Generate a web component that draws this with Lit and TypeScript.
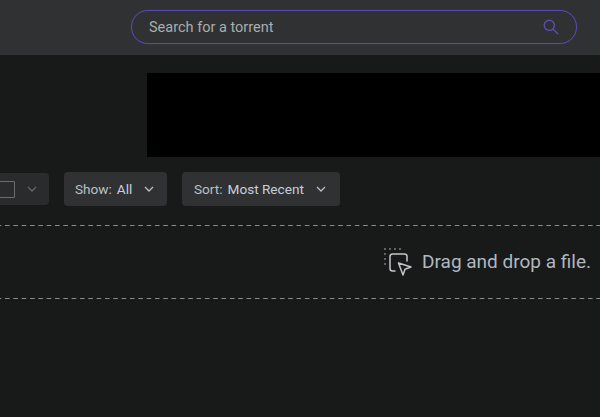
import { LitElement, html, css } from "lit";
import { customElement } from "lit/decorators.js";

const chevron = () => html`<svg class="chev" width="10" height="6" viewBox="0 0 10 6" fill="none" stroke="currentColor" stroke-width="1.3"><path d="M1 1l4 4 4-4"/></svg>`;

@customElement("app-root")
export class AppRoot extends LitElement {
  static styles = css`
    :host { display: block; width: 600px; height: 417px; overflow: hidden; background: #181a1a; font-family: "Roboto", "Liberation Sans", sans-serif; }
    .header { height: 55px; box-sizing: border-box; background: #2f3133; padding: 10px 23px 0 131px; }
    .search { height: 34px; box-sizing: border-box; border: 1px solid #5d48b3; box-shadow: 0 0 1px #5d48b3; border-radius: 17px; display: flex; align-items: center; justify-content: space-between; padding: 0 17px; color: #a9adb1; font-size: 14.5px; }
    .search svg { display: block; }
    .banner { height: 84px; margin: 18px 0 0 147px; background: #000; }
    .toolbar { display: flex; gap: 15px; margin: 15px 0 0 -20px; align-items: flex-start; }
    .btn { height: 34px; box-sizing: border-box; background: #2f3133; border-radius: 4px; display: flex; align-items: center; color: #b9c0c7; font-size: 13.6px; white-space: nowrap; }
    .check { width: 69px; height: 32px; margin-top: 1px; background: #292b2d; padding-left: 18px; gap: 12px; color: #62666a; }
    .box { width: 15px; height: 15px; border: 1.5px solid #6b6e71; border-radius: 1px; flex: none; }
    .show { width: 103px; padding-left: 11px; }
    .sort { width: 158px; padding-left: 12px; }
    .val { margin-left: 5px; color: #c6d0da; }
    .btn .chev { margin-left: auto; margin-right: 13px; display: block; }
    .sort .chev { margin-right: 14px; }
    .check .chev { margin: 0; }
    .drop { height: 74px; box-sizing: border-box; margin-top: 19px; padding: 0 9px 1px 0; display: flex; justify-content: flex-end; align-items: center; gap: 10px; color: #b0b8c0; font-size: 19px; background-image: linear-gradient(90deg, #8a8d90 0 5px, transparent 5px), linear-gradient(90deg, #8a8d90 0 5px, transparent 5px); background-size: 8.33px 1px; background-position: 5px 0, 5px 100%; background-repeat: repeat-x; }
    .drop svg { display: block; color: #c3c6c9; }
  `;

  render() {
    return html`
      <div class="header">
        <div class="search">
          <span>Search for a torrent</span>
          <svg width="16" height="16" viewBox="0 0 16 16" fill="none" stroke="#5f4bb6" stroke-width="1.4"><circle cx="6.3" cy="6.3" r="5.1"/><path d="m10 10 5 5"/></svg>
        </div>
      </div>
      <div class="banner"></div>
      <div class="toolbar">
        <div class="btn check"><span class="box"></span>${chevron()}</div>
        <div class="btn show"><span>Show:</span><span class="val">All</span>${chevron()}</div>
        <div class="btn sort"><span>Sort:</span><span class="val">Most Recent</span>${chevron()}</div>
      </div>
      <div class="drop">
        <svg width="28" height="28" viewBox="0 0 28 28" fill="none" stroke="currentColor" stroke-width="1.5" stroke-linecap="round" stroke-linejoin="round">
          <path d="M1 1h.01M6 1h.01M11 1h.01M16 1h.01M1 6h.01M1 11h.01M1 16h.01" stroke-width="1.6"/>
          <path d="M11 23H8.500A2.500 2.500 0 0 1 6 20.500v-12A2.500 2.500 0 0 1 8.500 6h12A2.500 2.500 0 0 1 23 8.500V13"/>
          <path d="m14.500 15 12.500 4-6 2.200-2 5.800z"/>
        </svg>
        <span>Drag and drop a file.</span>
      </div>
    `;
  }
}
